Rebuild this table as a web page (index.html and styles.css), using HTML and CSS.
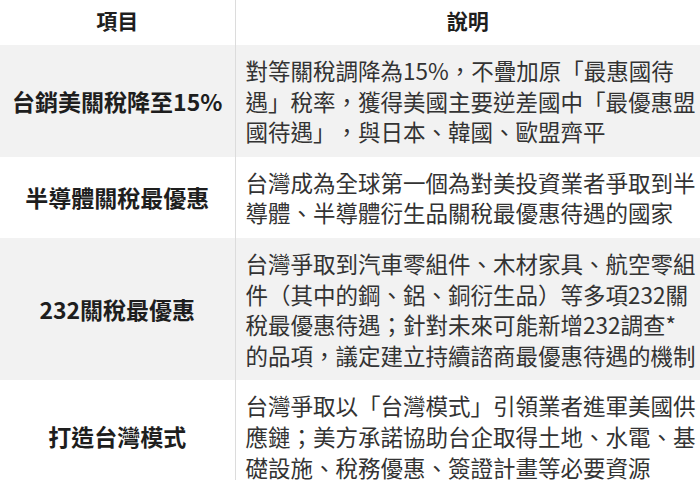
FILE: index.html
```html
<!DOCTYPE html>
<html lang="zh-Hant">
<head>
<meta charset="utf-8">
<link rel="stylesheet" href="styles.css">
</head>
<body>
<table class="tariff">
  <colgroup>
    <col class="c-item">
    <col class="c-desc">
  </colgroup>
  <thead>
    <tr><th class="col-item">項目</th><th class="col-desc">說明</th></tr>
  </thead>
  <tbody>
    <tr class="alt">
      <td class="item">台銷美關稅降至15%</td>
      <td class="desc">對等關稅調降為15%，不疊加原「最惠國待<br>遇」稅率，獲得美國主要逆差國中「最優惠盟<br>國待遇」，與日本、韓國、歐盟齊平</td>
    </tr>
    <tr>
      <td class="item">半導體關稅最優惠</td>
      <td class="desc">台灣成為全球第一個為對美投資業者爭取到半<br>導體、半導體衍生品關稅最優惠待遇的國家</td>
    </tr>
    <tr class="alt">
      <td class="item">232關稅最優惠</td>
      <td class="desc">台灣爭取到汽車零組件、木材家具、航空零組<br>件（其中的鋼、鋁、銅衍生品）等多項232關<br>稅最優惠待遇；針對未來可能新增232調查*<br>的品項，議定建立持續諮商最優惠待遇的機制</td>
    </tr>
    <tr>
      <td class="item">打造台灣模式</td>
      <td class="desc">台灣爭取以「台灣模式」引領業者進軍美國供<br>應鏈；美方承諾協助台企取得土地、水電、基<br>礎設施、稅務優惠、簽證計畫等必要資源</td>
    </tr>
  </tbody>
</table>
</body>
</html>
```

FILE: styles.css
```css
html, body {
  margin: 0;
  padding: 0;
  background: #ffffff;
}
body {
  font-family: "Noto Sans CJK TC", "Noto Sans", sans-serif;
  color: #333333;
  text-spacing-trim: space-all;
}
.tariff {
  width: 700px;
  border-collapse: collapse;
  table-layout: fixed;
}
.c-item { width: 235px; }
.c-desc { width: 465px; }
th {
  font-size: 21px;
  font-weight: 700;
  color: #1e1e1e;
  line-height: 30px;
  padding: 5px 0 10px;
  text-align: center;
}
th.col-item {
  border-right: 1px solid #dcdcdc;
}
td {
  padding: 10px 0;
  vertical-align: middle;
}
td.item {
  font-size: 23px;
  font-weight: 700;
  color: #1e1e1e;
  text-align: center;
  line-height: 30px;
  border-right: 1px solid #dcdcdc;
  white-space: nowrap;
}
td.desc {
  font-size: 22.5px;
  line-height: 30.6px;
  color: #333333;
  white-space: nowrap;
  padding-left: 10px;
}
tr.alt td {
  background: #f2f2f2;
}
```
